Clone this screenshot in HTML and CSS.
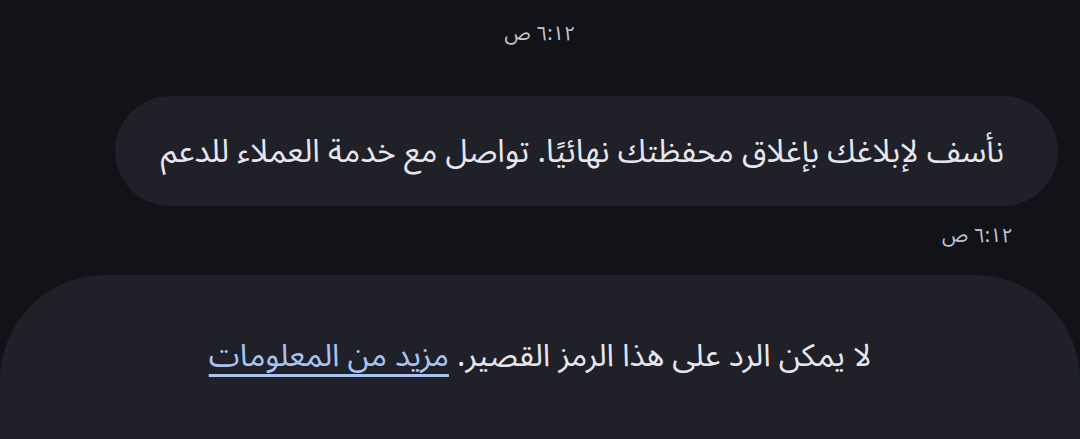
FILE: index.html
```html
<!DOCTYPE html>
<html lang="ar" dir="rtl">
<head>
<meta charset="utf-8">
<link rel="stylesheet" href="styles.css">
</head>
<body>
<div class="chat">
  <div class="stamp stamp-center">٦:١٢ ص</div>
  <div class="bubble">نأسف لإبلاغك بإغلاق محفظتك نهائيًا. تواصل مع خدمة العملاء للدعم</div>
  <div class="stamp stamp-side">٦:١٢ ص</div>
  <div class="notice">
    <p class="notice-text">لا يمكن الرد على هذا الرمز القصير. <a href="#" class="link">مزيد من المعلومات</a></p>
  </div>
</div>
</body>
</html>
```
FILE: styles.css
```css
html, body {
  margin: 0;
  padding: 0;
  background: #111318;
  height: 439px;
  overflow: hidden;
}
.chat {
  display: flex;
  flex-direction: column;
  font-family: "Noto Sans Arabic", "Noto Naskh Arabic", "DejaVu Sans", sans-serif;
  color: #e6e6ee;
}
.stamp {
  font-size: 20px;
  line-height: 24px;
  color: #c4c6d0;
}
.stamp-center {
  text-align: center;
  margin-top: 22px;
}
.bubble {
  margin: 50px 22px 0 115px;
  height: 110px;
  box-sizing: border-box;
  border-radius: 55px;
  background: #1f2028;
  display: flex;
  align-items: center;
  padding: 0 54px 0 0;
  font-size: 31.7px;
  white-space: nowrap;
}
.stamp-side {
  margin: 18px 67px 0 0;
}
.notice {
  margin-top: 27px;
  height: 164px;
  background: #1f2028;
  border-radius: 105px 105px 0 0;
  display: flex;
  justify-content: center;
}
.notice-text {
  margin: 59px 0 0;
  font-size: 31.3px;
  line-height: 44px;
  white-space: nowrap;
}
.link {
  color: #a9c2f2;
  text-decoration: underline;
  text-decoration-thickness: 3px;
  text-underline-offset: 8px;
}
```
